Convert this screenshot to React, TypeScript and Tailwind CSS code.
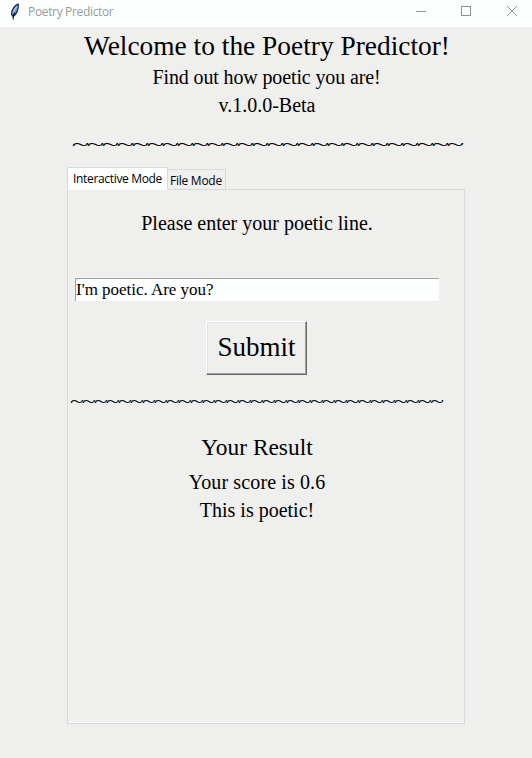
import React from "react";

const serif = "font-['Liberation_Serif','Times_New_Roman',serif]";
const sans = "font-['Open_Sans','Noto_Sans',sans-serif]";

function Feather() {
  return (
    <svg width="12" height="18" viewBox="0 0 12 18" className="ml-[9px] shrink-0">
      <path d="M9.3 1 C6 2 2.6 6 2.5 11.5 L4.2 13.5 C7.6 11 9.6 6 9.3 1Z" fill="#5b95da" stroke="#1d1a3c" strokeWidth="1.1" />
      <path d="M8 3.5 C5.6 6 4.6 8 4 11" fill="none" stroke="#a5cdf5" strokeWidth="1.2" />
      <path d="M5.8 9.5 L4.2 12.5 L4.2 16.5" fill="none" stroke="#0b0b18" strokeWidth="1.1" />
    </svg>
  );
}

function TitleBar() {
  return (
    <header className="flex h-[27px] items-start bg-[#fcfffe]">
      <div className="flex h-6 items-center">
        <Feather />
        <span className={`${sans} ml-[7px] text-[12px] leading-6 tracking-[-0.34px] text-[#999b99]`}>Poetry Predictor</span>
      </div>
      <svg width="104" height="12" viewBox="0 0 104 12" className="mt-[5px] mr-[13px] ml-auto" fill="none" stroke="#929492" shapeRendering="crispEdges">
        <path d="M1 6.5H11" />
        <rect x="46.5" y="1.5" width="9" height="9" />
        <path d="M92 1L102 11M102 1L92 11" shapeRendering="auto" />
      </svg>
    </header>
  );
}

export default function App() {
  return (
    <div className={`${serif} h-[758px] w-[532px] overflow-hidden bg-[#efefed] text-black`}>
      <TitleBar />
      <div className="flex flex-col items-center whitespace-nowrap">
        <h1 className="mt-[3px] h-[32px] pl-[2px] text-[27.4px] leading-[32px]">Welcome to the Poetry Predictor!</h1>
        <p className="mt-[2px] h-[28px] pl-px text-[20px] leading-[26px] tracking-[-0.13px]">Find out how poetic you are!</p>
        <p className="h-[28px] pl-[2px] text-[20px] leading-[26px]">v.1.0.0-Beta</p>
        <p className="mt-[8px] mb-px h-[32px] scale-x-[1.15] scale-y-[0.62] pl-px text-[28px] leading-[32px] tracking-[-2.1px]">{"~".repeat(26)}</p>
      </div>
      <div className={`${sans} mt-[6px] ml-[67px] flex h-[23px] items-end text-[12px] whitespace-nowrap`}>
        <div className="z-10 h-[23px] w-[101px] border border-b-0 border-[#d9d9d9] bg-[#fcfffe] pl-[5px] leading-[22px] tracking-[-0.33px]">Interactive Mode</div>
        <div className="h-[21px] w-[58px] border border-b-0 border-l-0 border-[#d9d9d9] pl-[2px] leading-[22px] tracking-[-0.25px]">File Mode</div>
      </div>
      <main className="-mt-px ml-[67px] flex h-[535px] w-[398px] flex-col border border-[#d9d9d9] whitespace-nowrap shadow-[inset_0_-1px_0_#fff]">
        <div className="flex w-[378px] flex-col items-center">
          <p className="mt-[20px] h-[28px] text-[20px] leading-[26px]">Please enter your poetic line.</p>
          <div className="mt-[40px] ml-[7px] h-[23px] w-[364px] self-start border-t border-l border-t-[#a0a0a0] border-l-[#a0a0a0] bg-[#fcfffe] text-[17px] leading-[22px] tracking-[-0.03px]">I'm poetic. Are you?</div>
          <button className="mt-[20px] mr-px h-[54px] w-[101px] border border-t-white border-r-[#696969] border-b-[#696969] border-l-white pb-0.5 text-[27px] leading-[50px] shadow-[inset_-1px_-1px_0_#a0a0a0,inset_1px_1px_0_#e3e3e3]">Submit</button>
          <p className="mt-[14px] mr-0.5 h-[27px] scale-x-[1.155] scale-y-[0.75] text-[22px] leading-[26px] tracking-[-1.51px]">{"~".repeat(31)}</p>
          <h2 className="mt-[15px] h-[34px] text-[23.4px] leading-[32px]">Your Result</h2>
          <p className="mt-[4px] h-[28px] text-[20px] leading-[26px] tracking-[0.12px]">Your score is 0.6</p>
          <p className="h-[28px] text-[20px] leading-[26px]">This is poetic!</p>
        </div>
      </main>
    </div>
  );
}
